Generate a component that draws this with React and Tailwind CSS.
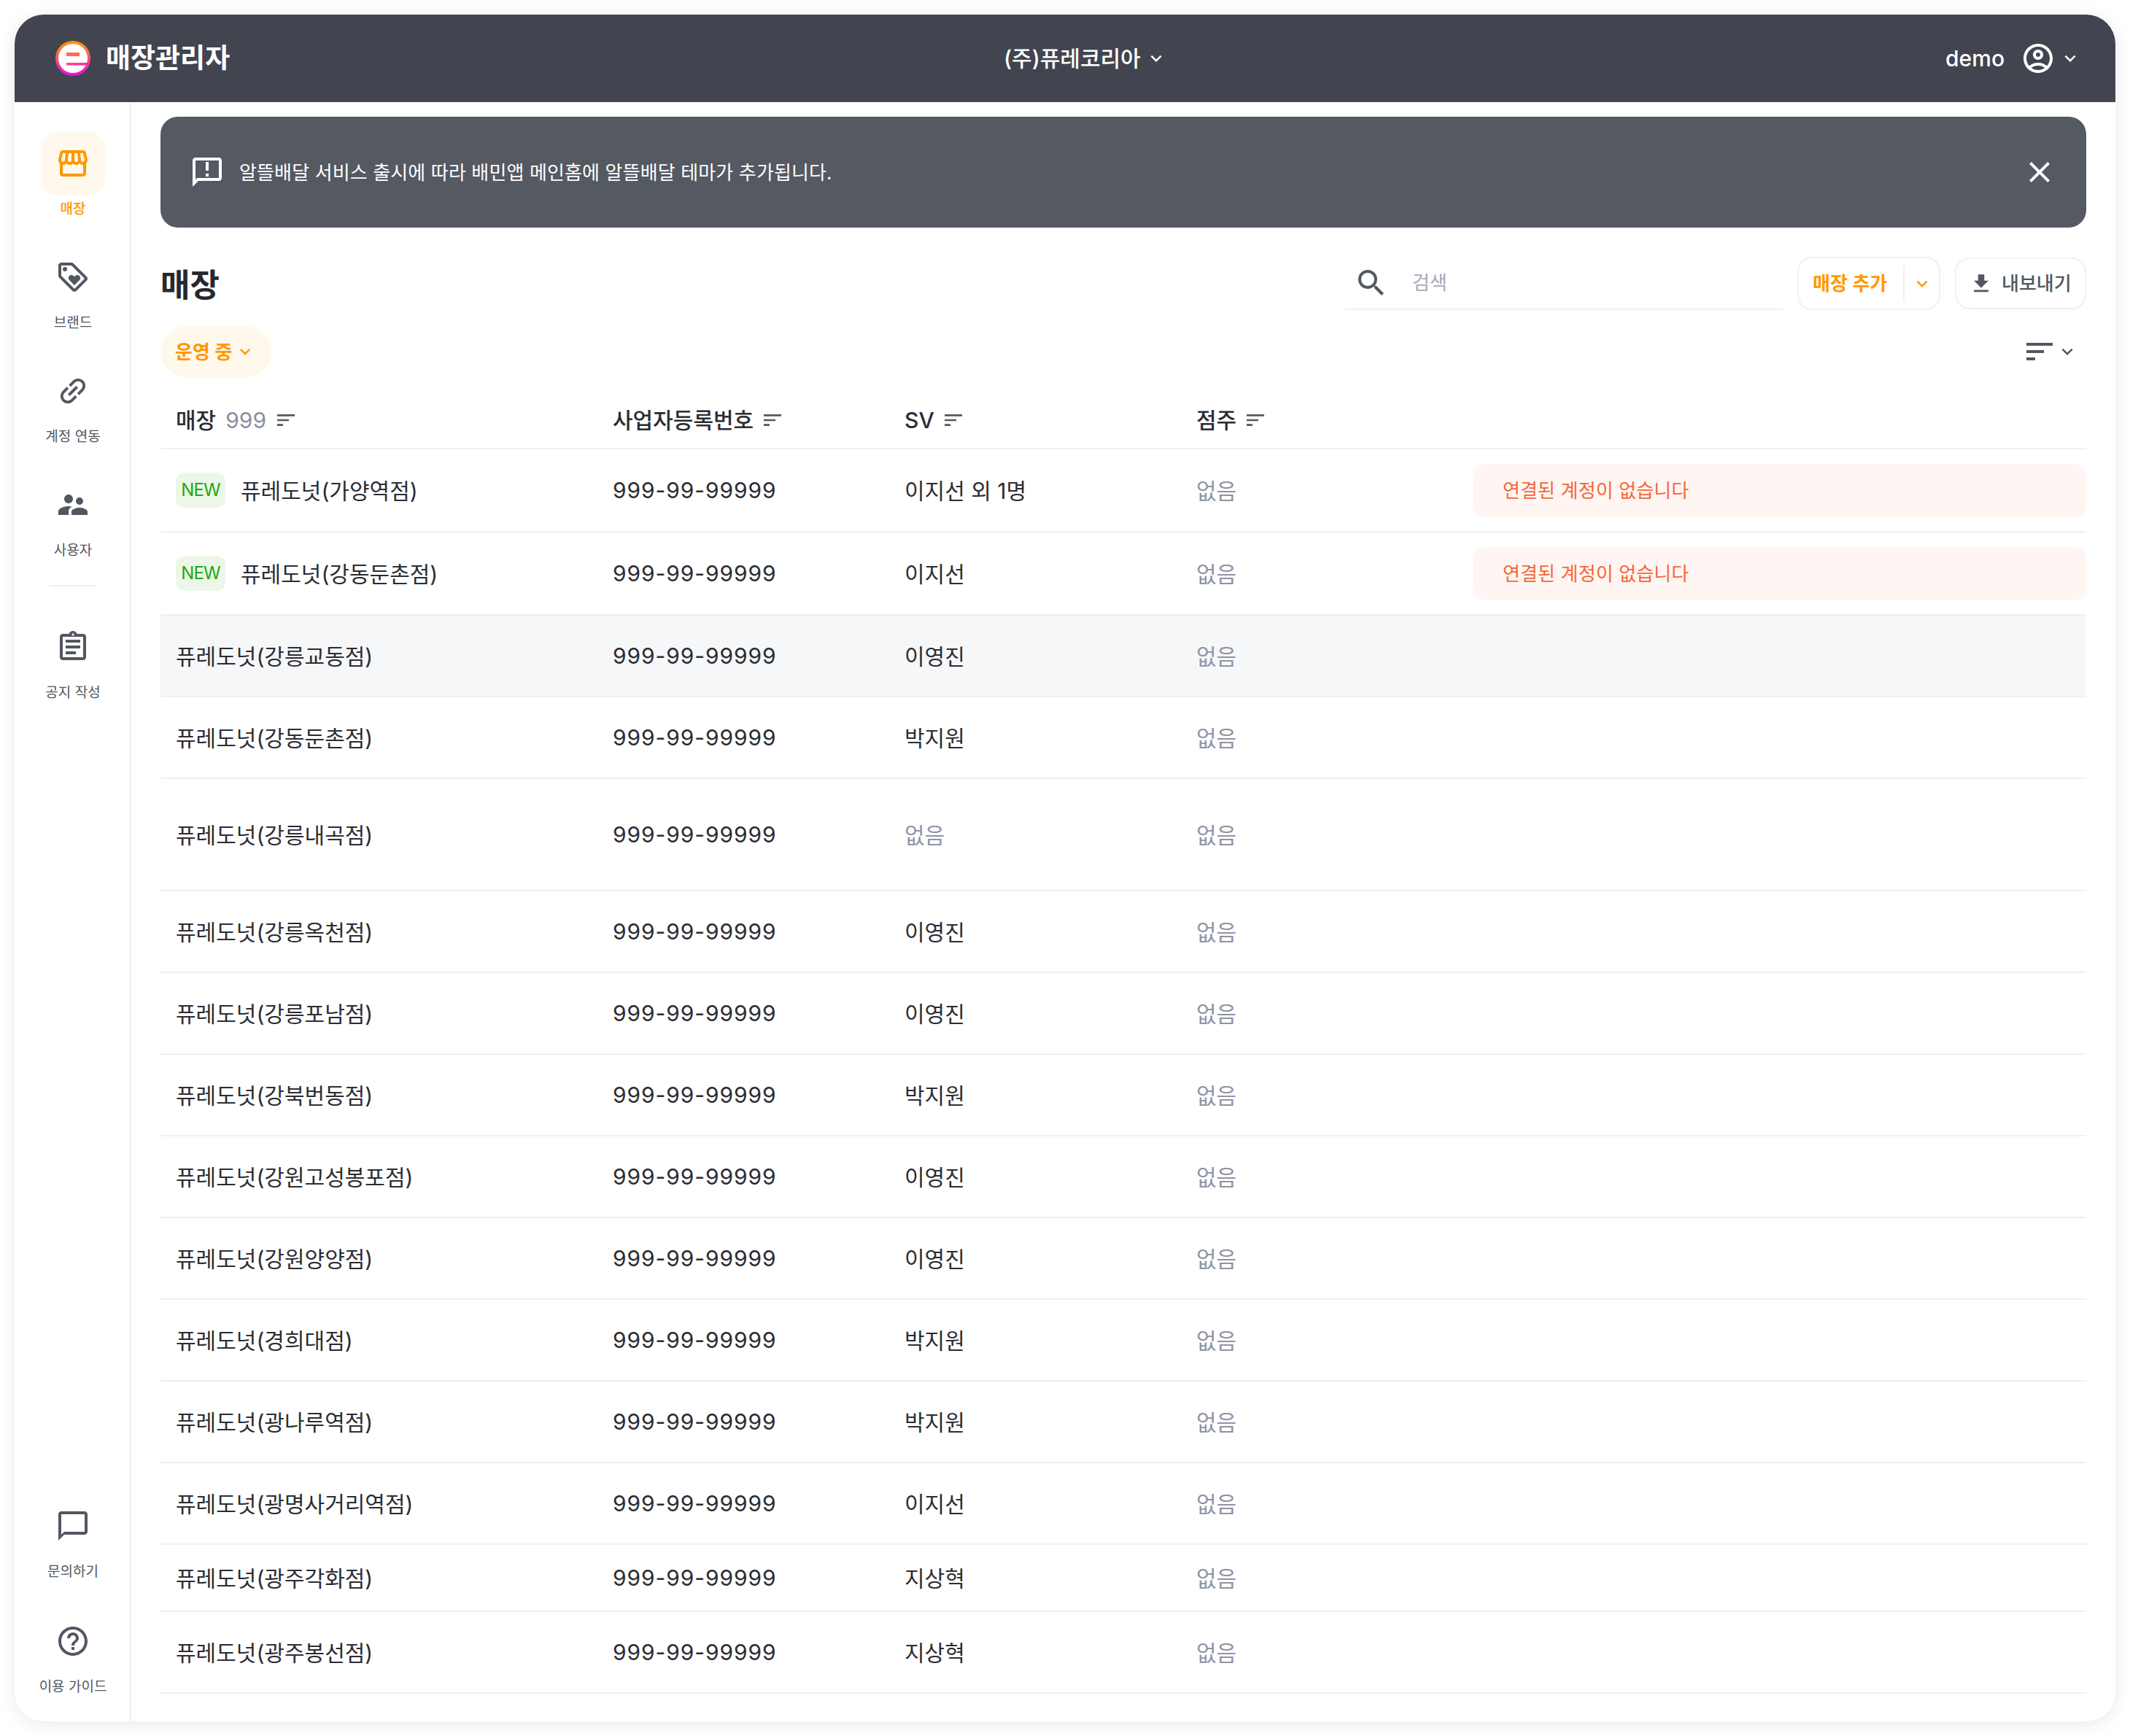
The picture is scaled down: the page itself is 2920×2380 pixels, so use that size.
import React from "react";
import {
  MdOutlineStorefront, MdOutlineLoyalty, MdLink, MdSupervisorAccount, MdOutlineAssignment,
  MdChatBubbleOutline, MdHelpOutline, MdOutlineAnnouncement, MdClose, MdSearch,
  MdKeyboardArrowDown, MdFileDownload, MdSort, MdOutlineAccountCircle,
} from "react-icons/md";

const Logo = () => (
  <svg width="48" height="48" viewBox="0 0 48 48" className="shrink-0">
    <defs>
      <linearGradient id="lg" x1="0" y1="0" x2="0" y2="1">
        <stop offset="0" stopColor="#ff9a00" />
        <stop offset="1" stopColor="#f00ce0" />
      </linearGradient>
      <linearGradient id="bar" x1="0" y1="0" x2="1" y2="0">
        <stop offset="0" stopColor="#ff4d88" />
        <stop offset="1" stopColor="#f52bb0" />
      </linearGradient>
    </defs>
    <circle cx="24" cy="24" r="24" fill="url(#lg)" />
    <circle cx="24" cy="24" r="20" fill="#fff" />
    <rect x="15" y="16" width="18" height="5" fill="#ff6a55" />
    <rect x="15" y="30" width="30" height="3.6" fill="url(#bar)" />
  </svg>
);

const NavItem = ({ icon: Icon, label, active, iconClass = "" }) => (
  <div className="flex h-[122px] flex-col items-center">
    <div className={`flex h-[88px] w-[88px] shrink-0 items-center justify-center rounded-[24px] ${active ? "bg-[#fff8ec] text-[#ff9800]" : "text-[#525761]"}`}>
      <Icon size={48} className={iconClass} />
    </div>
    <div className={`flex h-[38px] shrink-0 items-center whitespace-nowrap text-[19px] ${active ? "font-medium text-[#ff9800]" : "text-[#525761]"}`}>
      {label}
    </div>
  </div>
);

const SortIcon = () => <MdSort size={32} className="shrink-0 text-[#525761]" />;

const Chevron = ({ size = 30, className = "" }) => (
  <MdKeyboardArrowDown size={size} className={`shrink-0 ${className}`} />
);

const rows = [
  { name: "퓨레도넛(가양역점)", sv: "이지선 외 1명", h: "h-[114px]", isNew: true, err: true },
  { name: "퓨레도넛(강동둔촌점)", sv: "이지선", h: "h-[114px]", isNew: true, err: true },
  { name: "퓨레도넛(강릉교동점)", sv: "이영진", h: "h-[112px]", hover: true },
  { name: "퓨레도넛(강동둔촌점)", sv: "박지원", h: "h-[112px]" },
  { name: "퓨레도넛(강릉내곡점)", sv: "없음", h: "h-[154px]", svNone: true },
  { name: "퓨레도넛(강릉옥천점)", sv: "이영진", h: "h-[112px]" },
  { name: "퓨레도넛(강릉포남점)", sv: "이영진", h: "h-[112px]" },
  { name: "퓨레도넛(강북번동점)", sv: "박지원", h: "h-[112px]" },
  { name: "퓨레도넛(강원고성봉포점)", sv: "이영진", h: "h-[112px]" },
  { name: "퓨레도넛(강원양양점)", sv: "이영진", h: "h-[112px]" },
  { name: "퓨레도넛(경희대점)", sv: "박지원", h: "h-[112px]" },
  { name: "퓨레도넛(광나루역점)", sv: "박지원", h: "h-[112px]" },
  { name: "퓨레도넛(광명사거리역점)", sv: "이지선", h: "h-[112px]" },
  { name: "퓨레도넛(광주각화점)", sv: "지상혁", h: "h-[92px]" },
  { name: "퓨레도넛(광주봉선점)", sv: "지상혁", h: "h-[112px]" },
];

const cols = "grid grid-cols-[600px_400px_400px_400px_1fr] items-center";

export default function App() {
  return (
    <div className="h-[2380px] w-[2920px] bg-white p-[20px] [font-family:Inter,Noto_Sans_CJK_KR,sans-serif] text-[#2b2d33]">
      <div className="flex h-full w-full flex-col overflow-hidden rounded-[40px] bg-white shadow-[0_4px_24px_rgba(0,0,0,0.09)]">
        <header className="flex h-[120px] shrink-0 items-center bg-[#42454f] pl-[56px] pr-[47px] text-white">
          <div className="flex w-[1300px] items-center gap-[21px]">
            <Logo />
            <span className="text-[37px] font-bold">매장관리자</span>
          </div>
          <div className="flex items-center gap-[6px] text-[30px] font-medium">
            <span>(주)퓨레코리아</span>
            <Chevron size={30} />
          </div>
          <div className="ml-auto flex items-center gap-[22px]">
            <span className="text-[30px] font-medium">demo</span>
            <div className="flex items-center gap-[5px]">
              <MdOutlineAccountCircle size={48} />
              <Chevron size={30} />
            </div>
          </div>
        </header>

        <div className="flex min-h-0 flex-1">
          <aside className="flex w-[160px] shrink-0 flex-col items-center border-r-2 border-[#eff0f2] pl-[2px] pt-[40px] pb-[32px]">
            <div className="flex flex-col gap-[34px]">
              <NavItem icon={MdOutlineStorefront} label="매장" active />
              <NavItem icon={MdOutlineLoyalty} label="브랜드" />
              <NavItem icon={MdLink} label="계정 연동" iconClass="-rotate-45" />
              <NavItem icon={MdSupervisorAccount} label="사용자" />
            </div>
            <div className="mt-[32px] mb-[39px] h-[2px] w-[64px] bg-[#eff0f2]" />
            <NavItem icon={MdOutlineAssignment} label="공지 작성" />
            <div className="mt-auto flex flex-col gap-[36px]">
              <NavItem icon={MdChatBubbleOutline} label="문의하기" />
              <NavItem icon={MdHelpOutline} label="이용 가이드" />
            </div>
          </aside>

          <main className="min-w-0 flex-1 pl-[40px] pr-[40px] pt-[20px]">
            <div className="flex h-[152px] items-center rounded-[24px] bg-[#555962] pl-[40px] pr-[40px] text-white">
              <MdOutlineAnnouncement size={48} className="shrink-0" />
              <span className="ml-[20px] text-[26px] tracking-[0.005em]">
                알뜰배달 서비스 출시에 따라 배민앱 메인홈에 알뜰배달 테마가 추가됩니다.
              </span>
              <MdClose size={48} className="ml-auto" />
            </div>

            <div className="mt-[40px] flex h-[73px] items-center">
              <h1 className="pt-[4px] text-[44px] font-bold leading-none text-[#26282e]">매장</h1>
              <div className="ml-auto flex h-[73px] w-[600px] items-center border-b-2 border-[#eff0f2] pl-[12px]">
                <MdSearch size={48} className="text-[#525761]" />
                <span className="ml-[32px] text-[26px] text-[#a5aab8]">검색</span>
              </div>
              <div className="ml-[20px] flex h-[73px] w-[196px] items-center rounded-[20px] border-2 border-[#f0f1f3] pl-[19px]">
                <span className="w-[124px] text-[26px] font-semibold text-[#ff9800]">매장 추가</span>
                <div className="h-[49px] w-[2px] bg-[#f0f1f3]" />
                <Chevron size={30} className="ml-[9px] text-[#ff9800]" />
              </div>
              <div className="ml-[20px] flex h-[71px] w-[180px] items-center rounded-[20px] border-2 border-[#f0f1f3] pl-[17px] text-[#525761]">
                <MdFileDownload size={34} />
                <span className="ml-[11px] text-[26px] font-medium">내보내기</span>
              </div>
            </div>

            <div className="mt-[22px] flex h-[70px] items-center justify-between">
              <div className="flex h-[70px] w-[152px] items-center rounded-full bg-[#fff8ec] pl-[20px] text-[#ff9800]">
                <span className="text-[26px] font-semibold">운영 중</span>
                <Chevron size={28} className="ml-[4px]" />
              </div>
              <div className="flex items-center pr-[11px] text-[#525761]">
                <MdSort size={48} />
                <Chevron size={30} className="ml-[-1px]" />
              </div>
            </div>

            <div className={`${cols} mt-[23px] h-[76px] border-b-2 border-[#eff0f2] pb-[2px] text-[30px] font-medium`}>
              <div className="flex items-center pl-[21px]">
                <span>매장</span>
                <span className="ml-[13px] font-normal text-[#8a90a2]">999</span>
                <span className="ml-[11px]"><SortIcon /></span>
              </div>
              <div className="flex items-center pl-[20px]"><span>사업자등록번호</span><span className="ml-[10px]"><SortIcon /></span></div>
              <div className="flex items-center pl-[20px]"><span>SV</span><span className="ml-[10px]"><SortIcon /></span></div>
              <div className="flex items-center pl-[20px]"><span>점주</span><span className="ml-[10px]"><SortIcon /></span></div>
              <div />
            </div>

            {rows.map((r, i) => (
              <div key={i} className={`${cols} ${r.h} border-b-2 border-[#eff0f2] text-[30px] ${r.hover ? "bg-[#f6f7f9]" : ""}`}>
                <div className="flex items-center pl-[21px]">
                  {r.isNew && (
                    <span className="mr-[21px] flex h-[48px] w-[68px] items-center justify-center rounded-[12px] bg-[#edf7e9] text-[24px] tracking-[-0.04em] text-[#22a90f]">NEW</span>
                  )}
                  <span className="pt-[2px]">{r.name}</span>
                </div>
                <div className="pl-[20px] tracking-[0.03em]">999-99-99999</div>
                <div className={`pl-[20px] pt-[2px] ${r.svNone ? "text-[#8e94a6]" : ""}`}>{r.sv}</div>
                <div className="pl-[20px] pt-[2px] text-[#8e94a6]">없음</div>
                <div>
                  {r.err && (
                    <div className="flex h-[73px] items-center rounded-[16px] bg-[#fff5f2] pl-[40px] text-[26px] tracking-[0.005em] text-[#f2683a]">
                      연결된 계정이 없습니다
                    </div>
                  )}
                </div>
              </div>
            ))}
          </main>
        </div>
      </div>
    </div>
  );
}
